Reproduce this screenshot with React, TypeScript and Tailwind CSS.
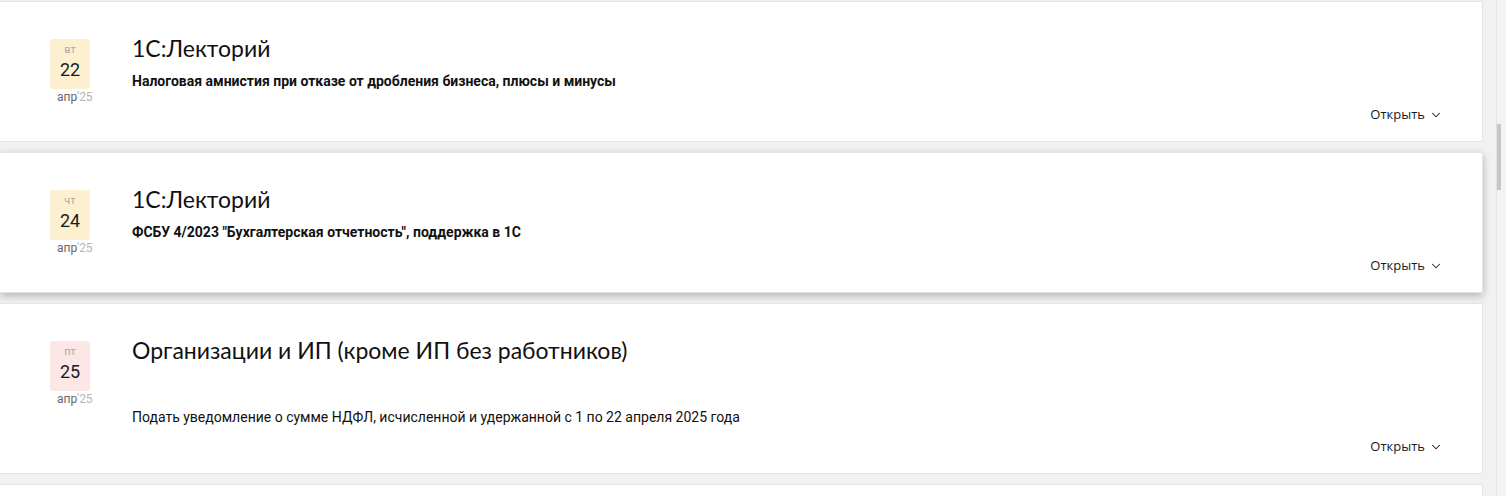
import { ChevronDown } from 'lucide-react';

type Item = {
  dow: string;
  day: string;
  tone: 'yellow' | 'pink';
  title: string;
  text: string;
  bold: boolean;
  tall?: boolean;
  active?: boolean;
};

const items: Item[] = [
  {
    dow: 'вт',
    day: '22',
    tone: 'yellow',
    title: '1С:Лекторий',
    text: 'Налоговая амнистия при отказе от дробления бизнеса, плюсы и минусы',
    bold: true,
  },
  {
    dow: 'чт',
    day: '24',
    tone: 'yellow',
    title: '1С:Лекторий',
    text: 'ФСБУ 4/2023 "Бухгалтерская отчетность", поддержка в 1С',
    bold: true,
    active: true,
  },
  {
    dow: 'пт',
    day: '25',
    tone: 'pink',
    title: 'Организации и ИП (кроме ИП без работников)',
    text: 'Подать уведомление о сумме НДФЛ, исчисленной и удержанной с 1 по 22 апреля 2025 года',
    bold: false,
    tall: true,
  },
];

const DateBadge = ({ dow, day, tone }: { dow: string; day: string; tone: Item['tone'] }) => (
  <div className="flex w-[44px] shrink-0 flex-col font-['Roboto',sans-serif]">
    <div
      className={`flex h-[50px] w-[40px] flex-col items-center rounded-[3px] pt-[4px] ${
        tone === 'pink' ? 'bg-[#fde6e6]' : 'bg-[#fdf0d1]'
      }`}
    >
      <span className="text-[11px] leading-[13px] text-[#aaaaaa]">{dow}</span>
      <span className="mt-[3px] text-[18px] leading-[22px] text-[#1a1a1a]">{day}</span>
    </div>
    <div className="mt-[1px] pl-[7px] text-[12px] leading-[14px]">
      <span className="text-[#666]">апр</span>
      <span className="text-[#b5b5b5]">'25</span>
    </div>
  </div>
);

const EventCard = ({ item }: { item: Item }) => (
  <div
    className={`flex w-[1483px] shrink-0 flex-col border border-l-0 border-[#e4e4e4] bg-white ${
      item.tall ? 'h-[171px]' : 'h-[141px]'
    } ${item.active ? 'shadow-[0_3px_8px_rgba(0,0,0,0.25)]' : ''}`}
  >
    <div className="flex flex-1 pl-[50px] pt-[37px]">
      <DateBadge dow={item.dow} day={item.day} tone={item.tone} />
      <div className="ml-[38px] flex flex-col">
        <div className="-mt-[5px] font-['Lato','Noto_Sans',sans-serif] text-[23px] leading-[28px] text-[#111]">
          {item.title}
        </div>
        <div
          className={`font-['Roboto',sans-serif] text-[14px] leading-[20px] text-[#111] ${
            item.bold ? 'mt-[9px] font-bold' : 'mt-[43px]'
          }`}
        >
          {item.text}
        </div>
      </div>
    </div>
    <div className="flex items-center justify-end pb-[17px] pr-[39px]">
      <span className="font-['Open_Sans',sans-serif] text-[13px] leading-[20px] text-[#1a1a1a]">Открыть</span>
      <ChevronDown className="ml-[4px] mt-[2px] h-[14px] w-[14px] text-[#222]" strokeWidth={1.8} />
    </div>
  </div>
);

export default function App() {
  return (
    <div className="flex h-[496px] w-[1506px] overflow-hidden bg-[#f1f1f1]">
      <div className="flex flex-1 flex-col gap-[10px] pt-[1px]">
        {items.map((item, i) => (
          <EventCard key={i} item={item} />
        ))}
        <div className="h-[40px] w-[1483px] shrink-0 border border-l-0 border-[#e4e4e4] bg-white" />
      </div>
      <div className="flex w-[10px] justify-start border-l border-[#e2e2e2] bg-[#f3f3f3] pt-[124px]">
        <div className="h-[66px] w-[4px] bg-[#c6c6c6]" />
      </div>
    </div>
  );
}
